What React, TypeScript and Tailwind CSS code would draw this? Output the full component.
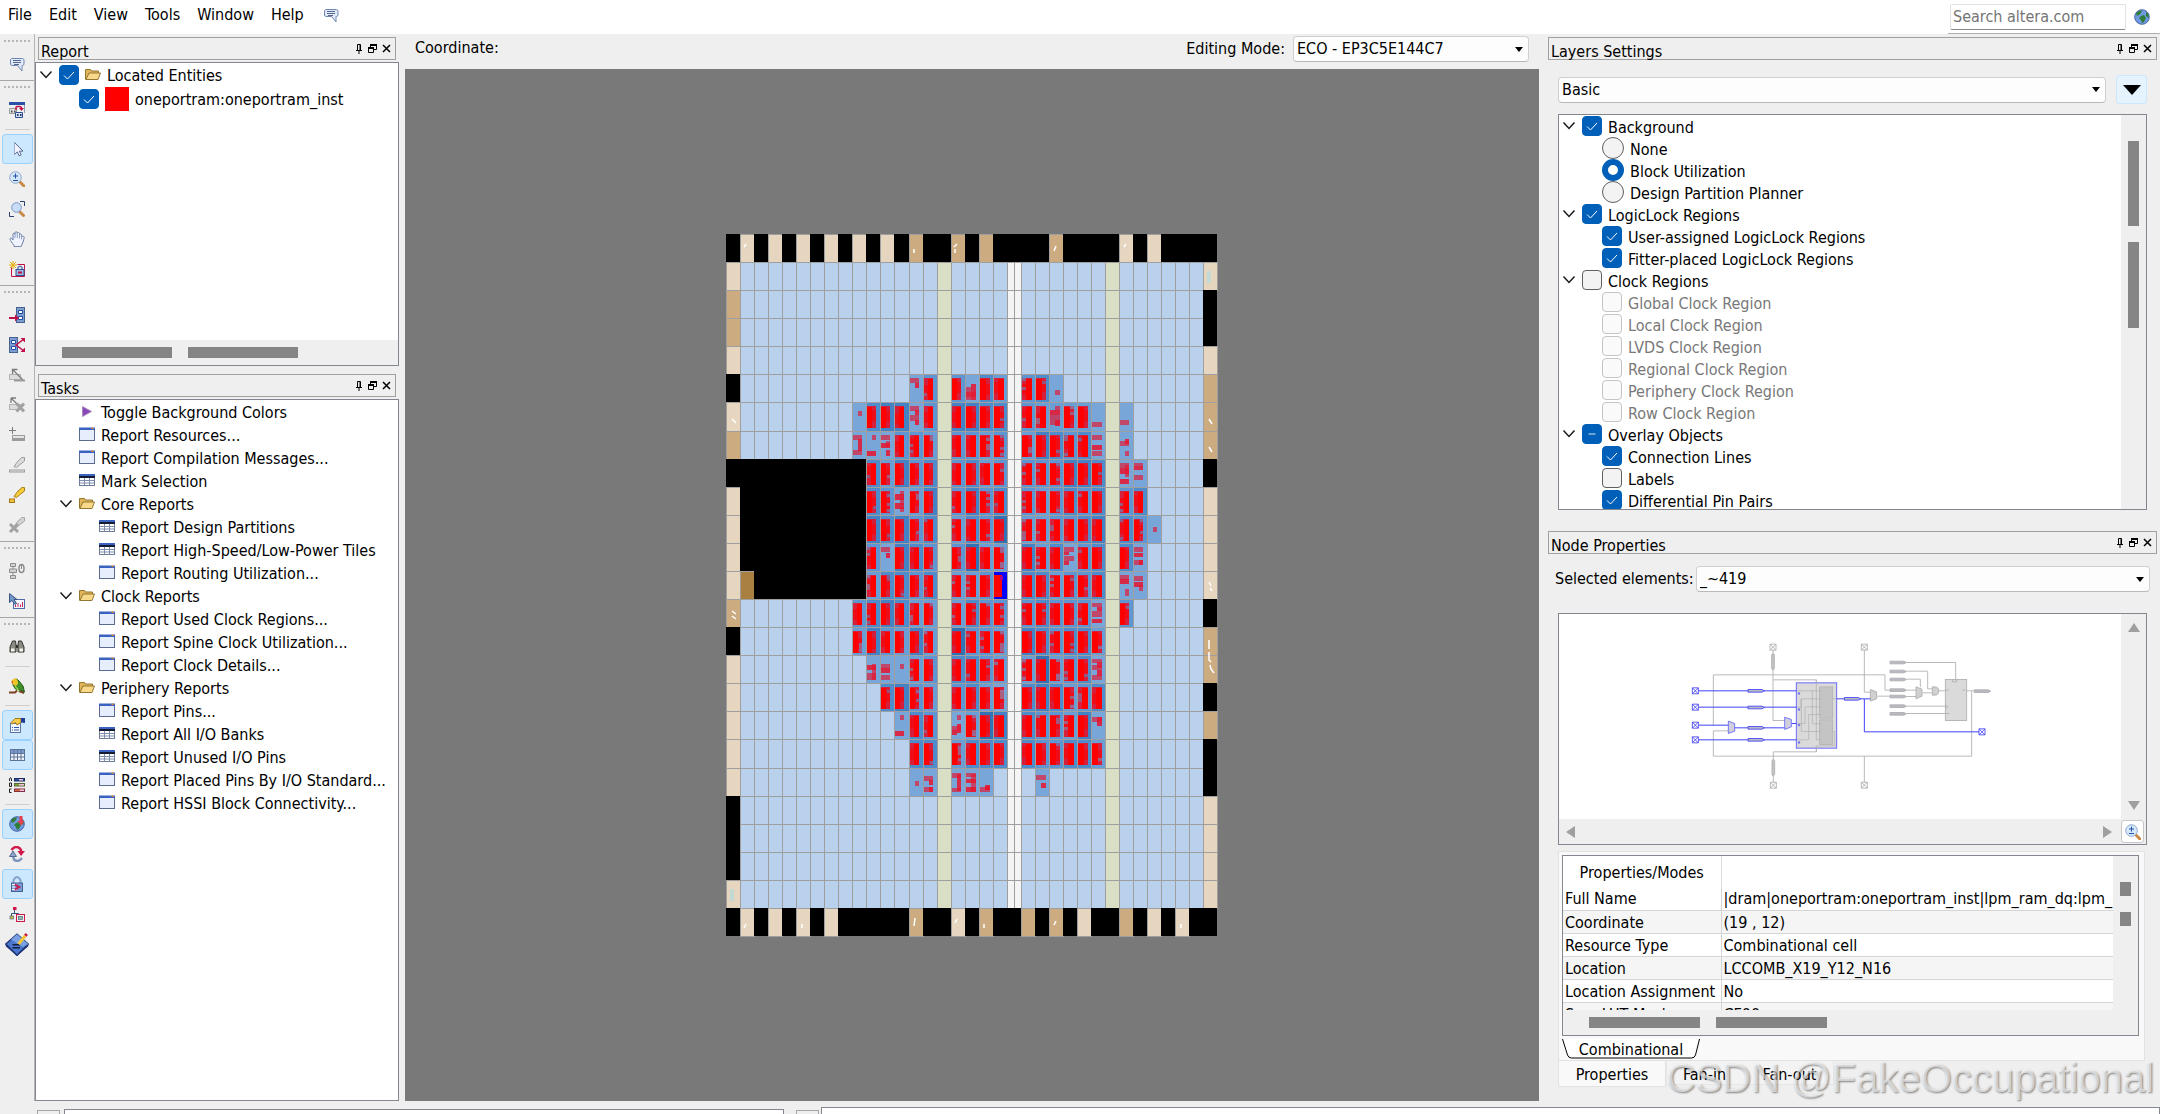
import { Fragment, type ReactNode } from "react";
import { clsx } from "clsx";

/* ------------------------------------------------------------------ */
/* Small glyphs                                                        */
/* ------------------------------------------------------------------ */

function Svg({ size = 16, className, children }: { size?: number; className?: string; children: ReactNode }) {
  return (
    <svg width={size} height={size} viewBox="0 0 16 16" className={clsx("shrink-0", className)} fill="none" aria-hidden>
      {children}
    </svg>
  );
}

const BubbleIcon = () => (
  <Svg>
    <path d="M2.5 2.5h11l1.500 1v5l-1.500 1h-.5v5.500l-4.500-5.500H3L1.500 8.500v-5z" fill="#dfe9fb" stroke="#7088ae" />
    <path d="M4 4.500h8M4 6.500h8M5 8.500h5" stroke="#33466b" strokeWidth=".8" />
  </Svg>
);

const WindowsIcon = () => (
  <Svg>
    <rect width="16" height="3" fill="#2a50a8" />
    <path d="M15.500 3v8" stroke="#8d9cb8" />
    <path d="M0.500 6.500h7v5h-7z" fill="#e4e4e4" stroke="#9a9a9a" />
    <path d="M2 9.500h1.500M5 9.500h1.500" stroke="#444" strokeWidth="2" />
    <path d="M7 8V5.500q0-1 1-1h2.500q2 0 2 2" stroke="#c0104a" strokeWidth="1.500" />
    <path d="M10 6h5l-2.500 3z" fill="#c0104a" />
    <path d="M6.500 10.500h7v5h-7z" fill="#d7e2f7" stroke="#2c4f8f" />
    <path d="M8 13h1.500M11 13h1.500" stroke="#22345a" strokeWidth="2" />
  </Svg>
);

const CursorIcon = () => (
  <Svg>
    <path d="M5.500 1.500v12l2.800-2.600 1.900 4 2-1-1.800-3.800h3.600z" fill="#f1f4ff" stroke="#5a6a90" />
    <path d="M5.500 1.500v12" stroke="#9db0d6" />
  </Svg>
);

const ZoomIcon = () => (
  <Svg>
    <path d="M11 11l4 4" stroke="#c98a45" strokeWidth="3" strokeLinecap="round" />
    <circle cx="6.500" cy="6.500" r="5.800" fill="#d5e8fb" stroke="#8fa9cf" />
    <path d="M6.500 2.500v5M4 5h5M4 9.500h5" stroke="#2450a5" />
  </Svg>
);

const ZoomFitIcon = () => (
  <Svg>
    <path d="M11 0.500h4.500V5M0.500 11v4.500H5" stroke="#2b4270" />
    <path d="M11 11l3.500 3.500" stroke="#c98a45" strokeWidth="3" strokeLinecap="round" />
    <circle cx="7.500" cy="6.500" r="4.800" fill="#c9def6" stroke="#7896c4" />
  </Svg>
);

const HandIcon = () => (
  <Svg>
    <path
      d="M5 14.500C3.500 12 1.500 10 0.800 7.800 1.500 6.500 3 7.300 4 9V3.200c0-1.400 1.800-1.400 2 0V1.800c.2-1.500 2-1.500 2.200 0v.600c.4-1.400 2.200-1.200 2.300.2v1.200c.5-1 2-.8 2.100.4v1.600c1-1 2.600-.6 2.600.6-.4 3.200-1.700 6-3.200 9.200H5z"
      fill="#eef3ff"
      stroke="#6c7fa8"
    />
    <path d="M6 3v4M8.300 2.500V7M10.500 3.500v4M12.600 5v3.500" stroke="#8fa0c4" />
  </Svg>
);

const NewRegionIcon = () => (
  <Svg>
    <path d="M2.500 6.500v9h13v-12h-7" stroke="#c0104a" />
    <path d="M4 0v8M0 4h8M1 1l6 6M7 1L1 7" stroke="#e9ab00" />
    <path d="M9 9V6.500q2-2.500 4 0V9" stroke="#5d7bb0" strokeWidth="1.500" />
    <rect x="7" y="8.500" width="8" height="6" fill="#9fb8e2" stroke="#33558f" />
    <path d="M9 11.500h4" stroke="#c0104a" strokeWidth="2" />
  </Svg>
);

const FanInIcon = () => (
  <Svg>
    <rect x="7.500" y="0.500" width="8" height="15" fill="#7d9dd2" stroke="#44628f" />
    <path d="M9.500 3.500h4v3h-4zM9.500 9.500h4v3h-4z" fill="#fff" stroke="#1f4ca0" />
    <path d="M0 11h7" stroke="#c0104a" strokeWidth="2" />
    <path d="M6 7.500l4 3.500-4 3.500z" fill="#c0104a" />
  </Svg>
);

const FanOutIcon = () => (
  <Svg>
    <rect x="0.500" y="0.500" width="8" height="15" fill="#7d9dd2" stroke="#44628f" />
    <path d="M2.500 3.500h4v3h-4zM2.500 9.500h4v3h-4z" fill="#fff" stroke="#1f4ca0" />
    <path d="M15 2L7 8l8 6" stroke="#c0104a" strokeWidth="1.500" />
    <path d="M11.500 1H16v4.500zM11.500 15H16v-4.500z" fill="#c0104a" />
  </Svg>
);

const GrayArrowIcon = ({ cross }: { cross?: boolean }) => (
  <Svg>
    <rect x="0.500" y="7.500" width="11" height="5" fill="#dcdcdc" stroke="#b3b3b3" />
    {cross ? (
      <>
        <path d="M2 1l7 7M2 1v5M2 1h5" stroke="#7d7d7d" strokeWidth="1.300" />
        <path d="M7.500 6.500l7.500 8M15 6.500l-7.500 8" stroke="#a2a2a2" strokeWidth="3" />
      </>
    ) : (
      <>
        <path d="M3 2l11 11M3.500 2v5M3.500 2.500h5" stroke="#7d7d7d" strokeWidth="1.300" />
        <path d="M5 13.500h11" stroke="#9b9b9b" strokeWidth="2" />
      </>
    )}
  </Svg>
);

const GrayPlusIcon = () => (
  <Svg>
    <path d="M3.500 0v7M0 3.500h7" stroke="#7c7c7c" />
    <rect x="3.500" y="8.500" width="12" height="5" fill="#e6e6e6" stroke="#9b9b9b" />
    <path d="M4 11h11v2.500H4z" fill="#9b9b9b" />
  </Svg>
);

const PenIcon = ({ body, edge, base }: { body: string; edge: string; base: "line" | "swatch" | "cross" }) => (
  <Svg>
    <path d="M5 9.500L9 4l4-3.500h2.500V4L10.500 8l-3 2.500z" fill={body} stroke={edge} />
    {base === "line" ? <rect x="0.500" y="13" width="15" height="2" fill="#e4e4e4" stroke={edge} /> : null}
    {base === "swatch" ? <rect x="0.500" y="12" width="5" height="3.500" fill="#f3c431" stroke="#a0761a" /> : null}
    {base === "cross" ? <path d="M1 7l8 8M9 7l-8 8" stroke="#a2a2a2" strokeWidth="3" /> : null}
  </Svg>
);

const ClockTreeIcon = () => (
  <Svg>
    <path d="M1.500 0.500h5v3h-5zM0.500 6h7v3.500h-7zM1.500 12.500h5v3h-5zM4 3.500V6M4 9.500v3" stroke="#8d8d8d" fill="#d2d2d2" />
    <ellipse cx="12.500" cy="5.500" rx="2.500" ry="4" stroke="#8a8a8a" strokeWidth="1.500" />
    <path d="M12.500 1v5" stroke="#8a8a8a" />
  </Svg>
);

const PickChartIcon = () => (
  <Svg>
    <rect x="4.500" y="6.500" width="11" height="9" fill="#f4f6fc" stroke="#4c6ca5" />
    <path d="M6.500 14v-2M9 14v-4M11.500 14v-2.500M13.500 14V9" stroke="#cc2a55" />
    <path d="M0.500 0.500v9l2.500-2 3 4 1.500-1-2.500-4H8z" fill="#7396c8" stroke="#39557f" />
  </Svg>
);

const BinocularsIcon = () => (
  <Svg>
    <path d="M1 13V8l2.500-6h3L7 6v7zM15 13V8l-2.500-6h-3L9 6v7z" fill="#8c8c84" stroke="#34342f" />
    <path d="M7 6h2v3H7z" fill="#34342f" />
    <path d="M2 9.500h3.500v3H2zM10.500 9.500H14v3h-3.500z" fill="#f4f4ee" />
  </Svg>
);

const ParrotIcon = () => (
  <Svg>
    <path d="M0 14.500h6l2-2M10 13l5 2" stroke="#7b4422" strokeWidth="2" />
    <path d="M4 3q3-4 6 0l4 5 1.500 6-4-2-5-1L4 7z" fill="#3f8f2c" stroke="#245a1a" />
    <path d="M2.500 2.500Q6-1 8.500 2L9 6 6.500 8 4 6.500z" fill="#f0c52a" />
    <path d="M2 4l2-1.500V6z" fill="#d96a1c" />
    <path d="M6 8l4 5" stroke="#8fcf45" strokeWidth="1.500" />
  </Svg>
);

const HandListIcon = () => (
  <Svg>
    <rect x="1.500" y="6.500" width="10" height="9" fill="#f4f7ff" stroke="#5a76a6" />
    <path d="M3 10.500h1M5 10.500h5M3 13h1M5 13h5" stroke="#2c58b0" />
    <path d="M2 5.500l4-4H12v4L8 8 6.500 5.500 3 7z" fill="#f5cb4c" stroke="#a8791d" />
    <path d="M12 1h4v5l-4-.5z" fill="#1c3f99" />
  </Svg>
);

const GridIcon = () => (
  <Svg>
    <rect x="1.500" y="2.500" width="14" height="11" fill="#eef3fb" stroke="#5c7396" />
    <path d="M2 3h13v3H2z" fill="#7a9ad0" />
    <path d="M1.500 6.500h14M1.500 10h14M5 2.500v11M8.500 2.500v11M12 2.500v11" stroke="#5c7396" />
  </Svg>
);

const LegendIcon = () => (
  <Svg>
    <path d="M0.500 4V2l1-1.500L2.500 2v2M0.500 6h2v3.500h-2zM2.500 12h-2v3.500h2" stroke="#222" />
    <rect x="5.500" y="1.500" width="10" height="2.500" fill="#2b52a8" stroke="#1b2f5c" />
    <rect x="5.500" y="6.500" width="10" height="2.500" fill="#86a832" stroke="#55633d" />
    <rect x="5.500" y="12" width="10" height="2.500" fill="#e06a2a" stroke="#7a2f4a" />
    <path d="M10 2.700h4M10 7.700h5M11 13.200h4" stroke="#f2c1dd" strokeWidth="1.500" />
  </Svg>
);

const GlobeIcon = ({ arrow }: { arrow?: boolean }) => (
  <Svg>
    <circle cx="8" cy="8" r="7.300" fill="#6f9ae0" stroke="#4a68a8" />
    <path d="M2 4q3-3 6-2.500L7 4 5 6 3 7zM7 7l3-1 2 3-2 4-2 1-1-3-2-2z" fill="#2f7d38" />
    <path d="M12 3l2.500 2.500V9L12 7z" fill="#2f7d38" />
    {arrow ? <path d="M10.500 0h3v5h2L12 9.500 8.500 5h2z" fill="#e8404e" /> : null}
  </Svg>
);

const SwapIcon = () => (
  <Svg>
    <path d="M2.500 4Q6-1 11 2.500l1.500 2.500" stroke="#d3164a" strokeWidth="2.500" />
    <path d="M8.500 5H16l-4 5z" fill="#d3164a" />
    <path d="M13 12q-4 5-8 1.500L4 10" stroke="#7e97bd" strokeWidth="2.500" />
    <path d="M0.500 10.500L4 5l3.500 5.500z" fill="#8fa8cc" stroke="#516a92" />
  </Svg>
);

const LockIcon = () => (
  <Svg>
    <path d="M4.500 7V4q3.500-6 7 0v3" stroke="#86a3cf" strokeWidth="2" />
    <rect x="2.500" y="7" width="11" height="8.500" fill="#7d9bd0" stroke="#46639a" />
    <path d="M3 8.500h5M3 11h3M3 13.500h5" stroke="#fff" />
    <path d="M6 8.500l4 2.500-4 2.500" stroke="#c9134a" strokeWidth="2" />
  </Svg>
);

const HierarchyIcon = () => (
  <Svg>
    <path d="M5.500 4v3.500M2.500 10V7.500h7V9" stroke="#39537e" />
    <rect x="4" y="1" width="3.500" height="3" fill="#d3164a" />
    <rect x="1" y="10" width="3.500" height="3" fill="#c8c23a" stroke="#39537e" strokeWidth=".6" />
    <rect x="7.500" y="8.500" width="8" height="7" stroke="#d3164a" />
    <rect x="9.500" y="10.500" width="4" height="3" fill="#8fc4a4" stroke="#39537e" strokeWidth=".6" />
  </Svg>
);

const ChipEditIcon = () => (
  <Svg size={24}>
    <path d="M8 1.500l7.500 6.500L8 15.500.5 8z" fill="#4a77cc" stroke="#243a78" />
    <path d="M0.500 8L8 15.500 15.500 8v1.500L8 16 .5 9.500z" fill="#1b2f78" />
    <path d="M8 1.500L15.500 8 12 10 4 5z" fill="#7aa0e4" />
    <path d="M5 8.500h5M5 10.500h5" stroke="#14213f" />
    <path d="M9 8l4.500-5.500" stroke="#f2c531" strokeWidth="2" />
    <path d="M13.500 2.500l1-1.200" stroke="#c9134a" strokeWidth="2" />
  </Svg>
);

const FolderIcon = () => (
  <Svg>
    <path d="M0.500 12.500v-10h5l1 1.500h7v3" fill="#e2b55a" stroke="#94772f" />
    <path d="M1 12.500l3-6.500h11.500l-2.500 6.500z" fill="#f8d98c" stroke="#94772f" />
  </Svg>
);

const ReportIcon = () => (
  <Svg>
    <rect x="0.500" y="1.500" width="15" height="12" fill="#e6edfc" stroke="#5a6a90" />
    <path d="M0 0.500h16V3H0z" fill="#3a62c0" />
    <path d="M12.500 0.500h2V2h-2z" fill="#f08a24" />
  </Svg>
);

const TableIcon = () => (
  <Svg>
    <rect x="0.500" y="1.500" width="15" height="11" fill="#fff" stroke="#6d7d9b" />
    <path d="M0 1h16v2H0z" fill="#3a62c0" />
    <path d="M0 3h16v2H0z" fill="#141b33" />
    <path d="M1 7.500h14M1 10h14M5.500 5v7.500M10.500 5v7.500" stroke="#7d8dab" />
  </Svg>
);

const PlayIcon = () => (
  <Svg>
    <path d="M3.500 2.500l9 5-9 5z" fill="#8748b5" stroke="#a98ac0" />
  </Svg>
);

const Chevron = () => (
  <svg width="14" height="14" viewBox="0 0 14 14" className="shrink-0" fill="none" aria-hidden>
    <path d="M1.500 3.500L7 9.500l5.500-6" stroke="#1a1a1a" strokeWidth="1.500" />
  </svg>
);

/* ------------------------------------------------------------------ */
/* Form controls                                                       */
/* ------------------------------------------------------------------ */

interface CheckProps {
  id: string;
  checked?: boolean;
  disabled?: boolean;
  partial?: boolean;
}

function Check({ id, checked, disabled, partial }: CheckProps) {
  return (
    <span className="grid size-5 shrink-0">
      <input
        id={id}
        type="checkbox"
        defaultChecked={checked}
        disabled={disabled}
        className="peer size-5 appearance-none rounded-[4px] border border-[#5f5f5f] bg-[#f3f3f3] [grid-area:1/1] checked:border-[#005fb8] checked:bg-[#005fb8] disabled:border-[#c4c4c4] disabled:bg-[#fafafa]"
      />
      <svg viewBox="0 0 20 20" className="pointer-events-none hidden size-5 [grid-area:1/1] peer-checked:block" fill="none" aria-hidden>
        {partial ? <path d="M6.500 10h7" stroke="#8fb8de" strokeWidth="1.500" /> : <path d="M5 10.500l3.500 3.500L15 7" stroke="#fff" />}
      </svg>
    </span>
  );
}

function Radio({ id, checked }: { id: string; checked?: boolean }) {
  return (
    <input
      id={id}
      type="radio"
      name="background"
      defaultChecked={checked}
      className="size-[22px] shrink-0 appearance-none rounded-full border border-[#5f5f5f] bg-[#f3f3f3] checked:border-[6px] checked:border-[#005fb8] checked:bg-white"
    />
  );
}

interface ComboProps {
  id: string;
  label?: string;
  value: string;
  className?: string;
}

function Combo({ id, label, value, className }: ComboProps) {
  return (
    <div className={clsx("grid items-center", className)}>
      <select
        id={id}
        aria-label={label}
        className="h-[26px] w-full appearance-none rounded-[4px] border border-[#d0d0d0] border-b-[#b9b9b9] bg-[#fdfdfd] pl-[3px] leading-6 [grid-area:1/1]"
      >
        <option>{value}</option>
      </select>
      <svg width="8" height="5" viewBox="0 0 8 5" className="pointer-events-none mr-1.5 justify-self-end [grid-area:1/1]" aria-hidden>
        <path d="M0 0h8L4 5z" fill="#000" />
      </svg>
    </div>
  );
}

function DockTitle({ title, className }: { title: string; className?: string }) {
  return (
    <div className={clsx("flex h-[23px] shrink-0 justify-between border border-[#a0a0a0] pl-0.5", className)}>
      <h2 className="pt-1.5 leading-4">{title}</h2>
      <div className="flex items-center gap-[5px] self-center pr-1">
        <button type="button" aria-label={`Pin ${title}`}>
          <svg width="8" height="10" viewBox="0 0 8 10" fill="none" className="block" aria-hidden>
            <path d="M2.500 6V.5h3V6M1 6.500h6M4 6.500V10" stroke="#000" />
            <path d="M5 1v5" stroke="#000" />
          </svg>
        </button>
        <button type="button" aria-label={`Float ${title}`}>
          <svg width="9" height="9" viewBox="0 0 9 9" fill="none" className="block" aria-hidden>
            <path d="M2.500 3.500V1h6v4.500H6M.5 4h5v4.500h-5z" stroke="#000" />
            <path d="M2 1h7M0 4h6" stroke="#000" strokeWidth="2" />
          </svg>
        </button>
        <button type="button" aria-label={`Close ${title}`}>
          <svg width="9" height="9" viewBox="0 0 9 9" fill="none" className="block" aria-hidden>
            <path d="M1 1l7 7M8 1L1 8" stroke="#000" strokeWidth="1.500" />
          </svg>
        </button>
      </div>
    </div>
  );
}

/* ------------------------------------------------------------------ */
/* Menu bar and tool bar                                               */
/* ------------------------------------------------------------------ */

const MENUS = ["File", "Edit", "View", "Tools", "Window", "Help"];

function MenuBar() {
  return (
    <header className="flex h-[34px] shrink-0 justify-between bg-white">
      <nav className="flex items-center gap-[17px] pb-1 pl-2">
        {MENUS.map((menu) => (
          <button key={menu} type="button">
            {menu}
          </button>
        ))}
        <button type="button" aria-label="Feedback" className="ml-0.5">
          <BubbleIcon />
        </button>
      </nav>
      <div className="flex items-center gap-2 border-b border-[#b0b0b0] pr-2.5 pl-0.5">
        <input
          type="text"
          aria-label="Search altera.com"
          placeholder="Search altera.com"
          className="h-[26px] w-[176px] rounded-[2px] border border-[#e2e2e2] border-b-[#868686] bg-white px-0.5 placeholder:text-[#757575]"
        />
        <button type="button" aria-label="Go to web site">
          <GlobeIcon />
        </button>
      </div>
    </header>
  );
}

interface Tool {
  label: string;
  icon: ReactNode;
  active?: boolean;
}

// Tools per bar; the inner arrays are split by a thin separator.
const TOOLBARS: Tool[][][] = [
  [[{ label: "Send feedback", icon: <BubbleIcon /> }]],
  [
    [{ label: "Detach window", icon: <WindowsIcon /> }],
    [
      { label: "Selection tool", icon: <CursorIcon />, active: true },
      { label: "Zoom tool", icon: <ZoomIcon /> },
      { label: "Fit in window", icon: <ZoomFitIcon /> },
      { label: "Hand tool", icon: <HandIcon /> },
      { label: "Create LogicLock region", icon: <NewRegionIcon /> },
    ],
  ],
  [
    [
      { label: "Generate fan-in", icon: <FanInIcon /> },
      { label: "Generate fan-out", icon: <FanOutIcon /> },
      { label: "Immediate connections", icon: <GrayArrowIcon /> },
      { label: "Clear connections", icon: <GrayArrowIcon cross /> },
      { label: "Add node", icon: <GrayPlusIcon /> },
      { label: "Highlight routing", icon: <PenIcon body="#dcdcdc" edge="#9b9b9b" base="line" /> },
      { label: "Highlight", icon: <PenIcon body="#f6cd38" edge="#a87f1d" base="swatch" /> },
      { label: "Clear highlight", icon: <PenIcon body="#d2d2d2" edge="#a6a6a6" base="cross" /> },
    ],
  ],
  [
    [
      { label: "Show delays", icon: <ClockTreeIcon /> },
      { label: "Critical paths", icon: <PickChartIcon /> },
    ],
  ],
  [
    [{ label: "Find", icon: <BinocularsIcon /> }],
    [{ label: "Bird's eye view", icon: <ParrotIcon /> }],
    [
      { label: "Properties", icon: <HandListIcon />, active: true },
      { label: "Report window", icon: <GridIcon />, active: true },
      { label: "Color legend", icon: <LegendIcon /> },
    ],
    [
      { label: "Layers", icon: <GlobeIcon arrow />, active: true },
      { label: "Refresh", icon: <SwapIcon /> },
      { label: "LogicLock regions", icon: <LockIcon />, active: true },
      { label: "Hierarchy", icon: <HierarchyIcon /> },
      { label: "Check and save changes", icon: <ChipEditIcon /> },
    ],
  ],
];

function ToolBar() {
  return (
    <aside className="flex w-[35px] shrink-0 flex-col border-r border-[#b4b4b4]">
      {TOOLBARS.map((groups, i) => (
        <div key={i} className={clsx("flex flex-col items-center border-t pb-px", i === 0 ? "border-transparent" : "border-[#a6a6a6]")}>
          <div className="mb-[3px] flex h-[11px] items-center gap-0.5">
            {[0, 1, 2, 3, 4, 5, 6].map((dot) => (
              <span key={dot} className="size-0.5 bg-[#b5b5b5]" />
            ))}
          </div>
          {groups.map((tools, g) => (
            <Fragment key={g}>
              {g > 0 ? <hr className="my-1 w-[25px] border-[#cfcfcf]" /> : null}
              {tools.map((tool) => (
                <button
                  key={tool.label}
                  type="button"
                  aria-label={tool.label}
                  aria-pressed={tool.active}
                  className={clsx(
                    "flex h-[30px] w-[31px] items-center justify-center rounded-[3px] border",
                    tool.active ? "border-[#99d1ff] bg-[#cce8ff]" : "border-transparent",
                  )}
                >
                  {tool.icon}
                </button>
              ))}
            </Fragment>
          ))}
        </div>
      ))}
    </aside>
  );
}

/* ------------------------------------------------------------------ */
/* Left docks                                                          */
/* ------------------------------------------------------------------ */

type TaskIcon = "play" | "report" | "table";

interface Task {
  label: string;
  icon: TaskIcon;
}

const TASK_ICON: Record<TaskIcon, ReactNode> = {
  play: <PlayIcon />,
  report: <ReportIcon />,
  table: <TableIcon />,
};

const TOP_TASKS: Task[] = [
  { label: "Toggle Background Colors", icon: "play" },
  { label: "Report Resources...", icon: "report" },
  { label: "Report Compilation Messages...", icon: "report" },
  { label: "Mark Selection", icon: "table" },
];

const TASK_GROUPS: { label: string; tasks: Task[] }[] = [
  {
    label: "Core Reports",
    tasks: [
      { label: "Report Design Partitions", icon: "table" },
      { label: "Report High-Speed/Low-Power Tiles", icon: "table" },
      { label: "Report Routing Utilization...", icon: "report" },
    ],
  },
  {
    label: "Clock Reports",
    tasks: [
      { label: "Report Used Clock Regions...", icon: "report" },
      { label: "Report Spine Clock Utilization...", icon: "report" },
      { label: "Report Clock Details...", icon: "report" },
    ],
  },
  {
    label: "Periphery Reports",
    tasks: [
      { label: "Report Pins...", icon: "report" },
      { label: "Report All I/O Banks", icon: "table" },
      { label: "Report Unused I/O Pins", icon: "table" },
      { label: "Report Placed Pins By I/O Standard...", icon: "report" },
      { label: "Report HSSI Block Connectivity...", icon: "report" },
    ],
  },
];

function TaskRow({ task, nested }: { task: Task; nested?: boolean }) {
  return (
    <li className={clsx("flex h-[23px] items-center gap-1.5", nested ? "pl-[63px]" : "pl-[43px]")}>
      {TASK_ICON[task.icon]}
      <span className="pt-0.5 whitespace-nowrap">{task.label}</span>
    </li>
  );
}

function ReportDock() {
  return (
    <section>
      <DockTitle title="Report" className="mx-[3px]" />
      <div className="mt-0.5 flex h-[304px] flex-col border border-[#828790] bg-white">
        <ul className="flex-1">
          <li className="flex h-6 items-center pl-[3px]">
            <Chevron />
            <span className="ml-1.5">
              <Check id="located" checked />
            </span>
            <label htmlFor="located" className="ml-1.5 flex items-center gap-1.5">
              <FolderIcon />
              <span className="pt-0.5">Located Entities</span>
            </label>
          </li>
          <li className="flex h-6 items-center pl-[43px]">
            <Check id="inst" checked />
            <label htmlFor="inst" className="ml-1.5 flex items-center gap-1.5">
              <span className="size-6 bg-[#ff0000]" />
              <span className="pt-0.5">oneportram:oneportram_inst</span>
            </label>
          </li>
        </ul>
        <div className="flex h-[25px] items-center gap-4 bg-[#efefef] pl-[26px]">
          <span className="h-[11px] w-[110px] bg-[#858585]" />
          <span className="h-[11px] w-[110px] bg-[#858585]" />
        </div>
      </div>
    </section>
  );
}

function TasksDock() {
  return (
    <section className="mt-2 flex min-h-0 flex-1 flex-col">
      <DockTitle title="Tasks" className="mx-[3px]" />
      <ul className="mt-0.5 flex-1 overflow-hidden border border-[#828790] bg-white">
        {TOP_TASKS.map((task) => (
          <TaskRow key={task.label} task={task} />
        ))}
        {TASK_GROUPS.map((group) => (
          <li key={group.label}>
            <div className="flex h-[23px] items-center pl-[23px]">
              <Chevron />
              <span className="mx-1.5">
                <FolderIcon />
              </span>
              <span className="pt-0.5">{group.label}</span>
            </div>
            <ul>
              {group.tasks.map((task) => (
                <TaskRow key={task.label} task={task} nested />
              ))}
            </ul>
          </li>
        ))}
      </ul>
    </section>
  );
}

/* ------------------------------------------------------------------ */
/* Floorplan                                                           */
/* ------------------------------------------------------------------ */

// K black, B pad, T used pad, A pad with a PLL, W brown, . free LAB,
// G memory column, C clock spine, 1-6 LAB utilization, S selected LAB
const FLOORPLAN = [
  "KBKBKBKBKBKBKTKKTKTKKKKTKKKKBKBKKKK",
  "B..............G....C......G......A",
  "T..............G....C......G......K",
  "T..............G....C......G......K",
  "B..............G....C......G......B",
  "K............13G3142C341...G......T",
  "B........145513G5544C322221G1.....T",
  "T........111332G3323C254341G1.....T",
  "KKKKKKKKKK42534G3423C333554G11....K",
  "BKKKKKKKKK43125G3534C323434G34....B",
  "BKKKKKKKKK54534G2436C223345G431...B",
  "BKKKKKKKKK31543G3622C524134G41....B",
  "BWKKKKKKKK24434G223SC442334G11....B",
  "T........345422G2433C343331G3.....K",
  "K........253252G6332C543442G......T",
  "B.........11123G4432C262341G......T",
  "B..........4532G3421C454234G......K",
  "B...........143G1265C433251G......T",
  "B............44G2444C433442G......K",
  "B............11G111.C.1....G......K",
  "K..............G....C......G......B",
  "K..............G....C......G......B",
  "K..............G....C......G......B",
  "A..............G....C......G......B",
  "KBKBKBKBKKKKKTKKBKTKKTKTKBKKTKBKBKK",
];

const CELL_FILL: Record<string, string> = {
  K: "#000000",
  B: "#e6d5bf",
  A: "#e6d5bf",
  T: "#ccab80",
  W: "#a97f42",
  ".": "#b9d1ec",
  G: "#d9dfc5",
  C: "#f4f4f4",
  S: "#0000ff",
  "1": "#79a6d9",
  "2": "#6a9fd6",
  "3": "#5d96d2",
  "4": "#4f8ccb",
  "5": "#4282c5",
  "6": "#3273b6",
};

const colX = (c: number) => c * 14 + (c >= 13 ? 1 : 0);
const rowY = (r: number) => r * 28 + (r >= 7 ? 1 : 0) + (r >= 19 ? 1 : 0);

// Sparse LABs: [side, y, height]; side 0 left half, 1 right half, 2 both.
const SPARSE: Record<string, [number, number, number][]> = {
  "5-13": [[2, 4, 5], [1, 9, 5]],
  "5-17": [[0, 13, 13], [1, 10, 16], [2, 18, 5]],
  "5-23": [[1, 16, 5]],
  "6-9": [[1, 9, 5]],
  "6-13": [[2, 4, 5], [1, 8, 5], [2, 13, 6], [1, 18, 5]],
  "6-23": [[1, 4, 5], [2, 8, 5], [2, 13, 10], [1, 18, 6]],
  "6-26": [[2, 20, 5]],
  "6-28": [[2, 18, 5]],
  "7-9": [[2, 4, 5], [1, 8, 12], [2, 19, 5]],
  "7-10": [[1, 4, 5], [2, 20, 5]],
  "7-11": [[2, 4, 5], [2, 12, 5], [1, 10, 6], [1, 19, 6]],
  "7-26": [[2, 4, 5], [2, 14, 5], [2, 20, 5]],
  "7-28": [[2, 10, 5], [1, 8, 5], [1, 20, 5]],
  "8-28": [[2, 4, 5], [2, 9, 6], [1, 6, 12], [2, 20, 5]],
  "8-29": [[2, 4, 3], [2, 7, 4], [2, 16, 5]],
  "9-12": [[1, 4, 5], [2, 7, 6], [1, 10, 8], [2, 16, 6], [1, 20, 5]],
  "10-30": [[1, 12, 5]],
  "11-11": [[2, 4, 5], [1, 10, 5]],
  "11-24": [[2, 4, 5], [0, 9, 3], [2, 13, 5], [0, 18, 4]],
  "11-29": [[2, 4, 5], [2, 10, 4], [2, 17, 5], [1, 17, 5]],
  "12-28": [[2, 4, 5], [2, 8, 5], [1, 18, 7]],
  "12-29": [[2, 5, 5], [2, 11, 5], [1, 14, 6]],
  "13-26": [[2, 4, 4], [1, 8, 4], [2, 12, 6], [2, 20, 4]],
  "15-10": [[1, 9, 16], [2, 10, 5], [2, 18, 7]],
  "15-11": [[2, 9, 5], [2, 13, 5], [2, 20, 5]],
  "15-12": [[1, 9, 5]],
  "15-26": [[2, 4, 4], [1, 7, 6], [2, 10, 5], [1, 15, 6], [2, 20, 5]],
  "17-12": [[1, 4, 5], [2, 20, 5]],
  "17-16": [[1, 4, 5], [1, 13, 9], [2, 15, 5], [0, 19, 5]],
  "17-26": [[2, 6, 5], [1, 6, 9]],
  "19-13": [[1, 13, 5]],
  "19-14": [[2, 8, 5], [1, 12, 5], [2, 19, 5], [1, 19, 5]],
  "19-16": [[2, 5, 5], [1, 6, 17], [2, 20, 4]],
  "19-17": [[2, 5, 4], [2, 11, 4], [1, 6, 18], [2, 19, 5]],
  "19-18": [[2, 19, 5], [1, 17, 5], [1, 18, 4]],
  "19-22": [[2, 7, 5], [1, 15, 5]],
};

// Small deterministic hash, gives the texture of the filled LABs.
function noise(a: number, b: number, c: number) {
  const v = Math.sin(a * 127.1 + b * 311.7 + c * 74.7) * 43758.5453;
  return v - Math.floor(v);
}

function LabFill({ row, col, level }: { row: number; col: number; level: number }) {
  const x = colX(col) + 1;
  const y = rowY(row);
  const wide = col > 16 && col < 28 ? 1 : 0;
  const sparse = SPARSE[`${row}-${col}`];
  if (sparse) {
    return (
      <>
        {sparse.map(([side, dy, h], i) => (
          <rect key={i} x={x + (side === 1 ? 5 : 0)} y={y + dy} width={side === 2 ? 9 + wide : side === 1 ? 4 + wide : 5} height={h} fill="#e8142e" opacity={i % 2 ? 0.85 : 0.65} />
        ))}
      </>
    );
  }
  const strongRight = noise(row, col, 1) > 0.5;
  const gaps = [0, 1, 2, 3, 4, 5, 6].filter((i) => noise(row, col, i + 10) > 0.65 + level * 0.07);
  return (
    <>
      <rect x={x} y={y + 4} width={9 + wide} height="22" fill="#e3132b" opacity="0.9" />
      <rect x={strongRight ? x + 4 : x} y={y + 5} width={5 + wide} height="21" fill="#ff0000" />
      <rect x={x} y={y + 7 + Math.floor(noise(row, col, 5) * 5)} width={9 + wide} height="11" fill="#ff0000" opacity="0.6" />
      {gaps.map((i) => (
        <rect key={i} x={strongRight ? x : x + 6} y={y + 4 + i * 3} width={3 + wide} height="3" fill={CELL_FILL[level]} opacity="0.55" />
      ))}
    </>
  );
}

const ROUTES =
  "M20 10l-2 3M188 15v4M231 10l-3 3M229 15v4M330 12l-2 5M400 10l-2 3M6 185l4 4M6 377l4 3M6 382l4 3M20 690l-2 4M76 690v4M189 684l-1 8M231 685l-2 4M258 690v4M330 687l-2 4M455 690v4M483 185l3 5M483 213l3 5M483 348l2 4M484 354l2 3M483 406v9M483 418v8l2 2M484 431l1 4M485 435l3 4";

function Floorplan() {
  return (
    <svg width="492" height="703" viewBox="0 0 492 703" className="shrink-0" role="img" aria-label="Device floorplan">
      {FLOORPLAN.map((cells, row) =>
        cells.split("").map((cell, col) => {
          const x = colX(col);
          const y = rowY(row);
          const w = colX(col + 1) - x;
          const h = rowY(row + 1) - y;
          const level = Number(cell);
          return (
            <g key={`${row}-${col}`}>
              <rect x={x} y={y} width={w} height={h} fill={CELL_FILL[cell]} />
              {level > 0 ? <LabFill row={row} col={col} level={level} /> : null}
              {cell === "S" ? (
                <>
                  <rect x={x + 1} y={y + 4} width="8" height="22" fill="#f00" />
                  <rect x={x + 7} y={y + 5} width="3" height="4" fill="#a0008c" />
                </>
              ) : null}
              {cell === "A" ? <rect x={x + 4} y={y + 9} width="4" height="12" fill="#c3d9d3" /> : null}
              {cell === "C" ? <path d={`M${x + 7.5} ${y}v${h}`} stroke="#9f9f9f" /> : null}
              {cell !== "K" ? <rect x={x + 0.5} y={y + 0.5} width={w} height={h} fill="none" stroke="#9f9f9f" /> : null}
            </g>
          );
        }),
      )}
      <path d={ROUTES} fill="none" stroke="#ffffff" strokeWidth="1.500" />
    </svg>
  );
}

function ChipView() {
  return (
    <main className="flex min-w-0 flex-1 flex-col">
      <div className="flex h-[35px] shrink-0 items-start justify-between px-2.5 pt-0.5">
        <span>Coordinate:</span>
        <div className="flex items-center gap-2">
          <label htmlFor="editing-mode">Editing Mode:</label>
          <Combo id="editing-mode" value="ECO - EP3C5E144C7" className="w-[236px]" />
        </div>
      </div>
      <div className="flex min-h-0 flex-1 items-center justify-center overflow-hidden bg-[#797979]">
        <Floorplan />
      </div>
    </main>
  );
}

/* ------------------------------------------------------------------ */
/* Layers settings                                                     */
/* ------------------------------------------------------------------ */

interface Layer {
  label: string;
  checked?: boolean;
  disabled?: boolean;
}

interface LayerGroup extends Layer {
  partial?: boolean;
  radio?: boolean;
  children: Layer[];
}

const LAYERS: LayerGroup[] = [
  {
    label: "Background",
    checked: true,
    radio: true,
    children: [{ label: "None" }, { label: "Block Utilization", checked: true }, { label: "Design Partition Planner" }],
  },
  {
    label: "LogicLock Regions",
    checked: true,
    children: [
      { label: "User-assigned LogicLock Regions", checked: true },
      { label: "Fitter-placed LogicLock Regions", checked: true },
    ],
  },
  {
    label: "Clock Regions",
    children: [
      { label: "Global Clock Region", disabled: true },
      { label: "Local Clock Region", disabled: true },
      { label: "LVDS Clock Region", disabled: true },
      { label: "Regional Clock Region", disabled: true },
      { label: "Periphery Clock Region", disabled: true },
      { label: "Row Clock Region", disabled: true },
    ],
  },
  {
    label: "Overlay Objects",
    checked: true,
    partial: true,
    children: [{ label: "Connection Lines", checked: true }, { label: "Labels" }, { label: "Differential Pin Pairs", checked: true }],
  },
];

function LayerTree() {
  return (
    <div className="mt-2.5 mr-[13px] ml-[19px] flex h-[396px] shrink-0 overflow-hidden border border-[#828790] bg-white">
      <ul className="flex-1">
        {LAYERS.map((group) => (
          <li key={group.label}>
            <div className="flex h-[22px] items-center pl-[3px]">
              <Chevron />
              <span className="mx-1.5">
                <Check id={group.label} checked={group.checked} partial={group.partial} />
              </span>
              <label htmlFor={group.label} className="pt-1">
                {group.label}
              </label>
            </div>
            <ul>
              {group.children.map((layer) => (
                <li key={layer.label} className="flex h-[22px] items-center gap-1.5 pl-[43px]">
                  {group.radio ? <Radio id={layer.label} checked={layer.checked} /> : <Check id={layer.label} checked={layer.checked} disabled={layer.disabled} />}
                  <label htmlFor={layer.label} className={clsx("pt-1", layer.disabled && "text-[#787878]")}>
                    {layer.label}
                  </label>
                </li>
              ))}
            </ul>
          </li>
        ))}
      </ul>
      <div className="flex w-[25px] flex-col items-center gap-4 bg-[#efefef] pt-[26px]">
        <span className="h-[85px] w-[11px] bg-[#858585]" />
        <span className="h-[86px] w-[11px] bg-[#858585]" />
      </div>
    </div>
  );
}

function LayersDock() {
  return (
    <section className="shrink-0">
      <DockTitle title="Layers Settings" className="mr-[3px] ml-[9px]" />
      <div className="mt-[15px] mr-[13px] ml-[19px] flex items-center gap-2.5">
        <Combo id="layer-preset" label="Layer preset" value="Basic" className="flex-1" />
        <button type="button" aria-label="More presets" className="flex h-[29px] w-[31px] items-center justify-center rounded-[3px] border border-[#cce8ff] bg-[#e5f3ff]">
          <svg width="18" height="10" viewBox="0 0 18 10" aria-hidden>
            <path d="M0 0h18L9 10z" fill="#000" />
          </svg>
        </button>
      </div>
      <LayerTree />
    </section>
  );
}

/* ------------------------------------------------------------------ */
/* Node properties                                                     */
/* ------------------------------------------------------------------ */

function Port({ x, y }: { x: number; y: number }) {
  return <path d={`M${x - 9} ${y - 9}h18v18h-18zl18 18m0-18l-18 18`} strokeWidth="2.500" />;
}

function Buffer({ x, y, vertical }: { x: number; y: number; vertical?: boolean }) {
  return vertical ? (
    <path d={`M${x - 4} ${y}l4-3 4 3v42l-4 5-4-5z`} fill="#c4c4c4" strokeWidth="2.500" />
  ) : (
    <path d={`M${x} ${y - 4}h42l7 4-7 4h-42z`} fill="#b9b9c4" strokeWidth="2.500" />
  );
}

function CellSchematic() {
  return (
    <svg viewBox="-303 12 1686 612" className="h-full w-full" fill="none" role="img" aria-label="Combinational cell schematic">
      <g stroke="#acacac" strokeWidth="2.500">
        <path d="M339 118v212h35M339 208h130v216H340v92M160 345V193h515v46h16M205 361h-45v76h775V242M613 118v127h20M613 437v80" />
        <path d="M652 257h38M739 239h30M739 258h30M739 206h42v24M739 182h64v53h14M739 156h148v52M788 247h28M836 241h20M739 287h117M739 309h117M919 241h25" />
        <Port x={339} y={110} />
        <Port x={613} y={110} />
        <Port x={340} y={524} />
        <Port x={613} y={524} />
        <Buffer x={339} y={132} vertical />
        <Buffer x={340} y={450} vertical />
        {[156, 183, 207, 239, 258, 287, 310].map((y) => (
          <Buffer key={y} x={690} y={y} />
        ))}
        <Buffer x={943} y={242} />
        <path d="M631 237l19 7v21l-19 7zM768 229l18 7v21l-18 8z" fill="#d0d0d0" />
        <path d="M817 229h7q12 0 12 12.500T824 254h-7z" fill="#d0d0d0" />
        <rect x="856" y="207" width="64" height="123" fill="#dadada" />
        <path d="M856 283l8 6-8 6M878 207v7h12v-7M908 239h8M858 239h7M858 309h10" />
      </g>
      <rect x="409" y="217" width="121" height="196" fill="#dadada" stroke="#6a6af5" strokeWidth="3" />
      <g stroke="#adadad" strokeWidth="2">
        <rect x="479" y="229" width="39" height="94" fill="#c4c4c4" />
        <rect x="479" y="328" width="39" height="74" fill="#c4c4c4" />
        <path d="M411 241h73M457 241v99h27M411 290h12v-25h61M424 265v98h60M411 339h24v-50h49M411 388h35v-76h38M469 208v180h15M518 265h12M518 363h6v43h-55v18" />
      </g>
      <g stroke="#4040f8" strokeWidth="3">
        <path d="M115 241h294M115 290h294M115 344h90M225 352h148M395 339h14M115 388h294M530 265h83v99h344M613 265h18" />
        <Port x={106} y={241} />
        <Port x={106} y={290} />
        <Port x={106} y={344} />
        <Port x={106} y={388} />
        <Port x={966} y={364} />
        <Buffer x={264} y={241} />
        <Buffer x={264} y={291} />
        <Buffer x={264} y={352} />
        <Buffer x={264} y={388} />
        <Buffer x={553} y={265} />
        <path d="M205 332l19 7v23l-19 7zM374 320l20 7v22l-20 8z" fill="#cfcfde" strokeWidth="2" />
        <path d="M415 247h4v4h-4zM415 295h4v4h-4zM415 342h4v4h-4zM415 394h4v4h-4z" strokeWidth="2" />
      </g>
    </svg>
  );
}

function ScrollArrow({ label, path }: { label: string; path: string }) {
  return (
    <button type="button" aria-label={label}>
      <svg width="12" height="12" viewBox="0 0 12 12" className="block" aria-hidden>
        <path d={path} fill="#9f9f9f" />
      </svg>
    </button>
  );
}

const PROPERTIES: [string, string][] = [
  ["Full Name", "|dram|oneportram:oneportram_inst|lpm_ram_dq:lpm_ram_dq_component"],
  ["Coordinate", "(19 , 12)"],
  ["Resource Type", "Combinational cell"],
  ["Location", "LCCOMB_X19_Y12_N16"],
  ["Location Assignment", "No"],
  ["Sum LUT Mask", "CF00"],
];

function PropertyTable() {
  return (
    <div className="flex h-[181px] flex-col border border-[#828790] bg-[#efefef]">
      <div className="flex min-h-0 flex-1">
        <div className="min-w-0 flex-1 overflow-hidden bg-white">
          <table className="w-full table-fixed border-collapse">
            <thead>
              <tr className="h-[31px]">
                <th className="w-[158px] border-r border-[#dcdcdc] pt-0.5 text-center font-normal">Properties/Modes</th>
                <th aria-label="Value" />
              </tr>
            </thead>
            <tbody>
              {PROPERTIES.map(([name, value]) => (
                <tr key={name} className="h-[23px] border-b border-[#d5d5d5] even:bg-[#f5f5f5]">
                  <td className="border-r border-[#d5d5d5] pt-0.5 pl-0.5 leading-5 whitespace-nowrap">{name}</td>
                  <td className="overflow-hidden pt-0.5 pl-0.5 leading-5 whitespace-nowrap">{value}</td>
                </tr>
              ))}
            </tbody>
          </table>
        </div>
        <div className="flex w-[25px] shrink-0 flex-col items-center gap-4 pt-[26px]">
          <span className="h-3.5 w-[11px] bg-[#858585]" />
          <span className="h-3.5 w-[11px] bg-[#858585]" />
        </div>
      </div>
      <div className="flex h-[25px] items-center gap-4 pl-[26px]">
        <span className="h-[11px] w-[111px] bg-[#858585]" />
        <span className="h-[11px] w-[111px] bg-[#858585]" />
      </div>
    </div>
  );
}

function NodePropertiesDock() {
  return (
    <section className="mt-[21px] flex min-h-0 flex-1 flex-col">
      <DockTitle title="Node Properties" className="mr-[3px] ml-[9px]" />
      <div className="mt-3 mr-2.5 ml-4 flex items-center gap-0.5">
        <label htmlFor="selected-elements">Selected elements:</label>
        <Combo id="selected-elements" value="_~419" className="flex-1" />
      </div>

      <div className="mt-[21px] mr-[13px] ml-[19px] flex min-h-0 flex-1 flex-col border border-[#828790] bg-[#efefef]">
        <div className="flex min-h-0 flex-1">
          <div className="min-w-0 flex-1 bg-white">
            <CellSchematic />
          </div>
          <div className="flex w-[25px] shrink-0 flex-col items-center justify-between py-2">
            <ScrollArrow label="Scroll up" path="M6 1l6 9H0z" />
            <ScrollArrow label="Scroll down" path="M6 11l6-9H0z" />
          </div>
        </div>
        <div className="flex h-[25px] shrink-0 items-center justify-between pl-1.5">
          <ScrollArrow label="Scroll left" path="M1 6l9-6v12z" />
          <div className="flex items-center gap-2">
            <ScrollArrow label="Scroll right" path="M11 6L2 0v12z" />
            <button type="button" aria-label="Zoom schematic" className="mr-0.5 flex size-[23px] items-center justify-center rounded-[3px] border border-[#c8c8c8] bg-white">
              <ZoomIcon />
            </button>
          </div>
        </div>
      </div>

      <div className="mt-1.5 mr-[15px] ml-[19px] shrink-0 border border-[#e2e2e2] bg-[#f9f9f9] pt-[3px] pr-[5px] pb-0.5 pl-[3px]">
        <PropertyTable />
        <button type="button" className="mt-0.5 grid h-5 w-[138px] items-center">
          <svg viewBox="0 0 138 20" className="h-5 w-full [grid-area:1/1]" fill="#fff" aria-hidden>
            <path d="M0.500 0l5 16q1 3 4 3h120q3 0 4-3l4-16" stroke="#000" />
          </svg>
          <span className="pt-0.5 leading-5 [grid-area:1/1]">Combinational</span>
        </button>
      </div>
      <div role="tablist" className="ml-[19px] flex shrink-0 items-start">
        <button type="button" role="tab" aria-selected className="h-[26px] w-[108px] border border-t-0 border-[#e2e2e2] bg-[#f9f9f9] pt-0.5">
          Properties
        </button>
        <button type="button" role="tab" className="h-6 w-20 border border-t-0 border-r-0 border-[#e6e6e6] bg-[#f3f3f3] pt-0.5 pr-1">
          Fan-in
        </button>
        <button type="button" role="tab" className="h-6 w-[88px] border border-t-0 border-l-0 border-[#e6e6e6] bg-[#f3f3f3] pt-0.5">
          Fan-out
        </button>
      </div>
    </section>
  );
}

/* ------------------------------------------------------------------ */

function MessageStrip() {
  return (
    <footer className="flex h-[13px] shrink-0 items-end pl-[37px]">
      <div className="h-1 w-[23px] border border-b-0 border-[#a6a6a6]" />
      <div className="ml-1 h-[5px] w-[720px] border border-b-0 border-[#828790] bg-white" />
      <div className="ml-3 h-1 w-[23px] border border-b-0 border-[#a6a6a6]" />
      <div className="ml-0.5 h-[7px] flex-1 border border-b-0 border-[#828790] bg-white" />
    </footer>
  );
}

export default function App() {
  return (
    <div className="relative flex h-screen flex-col overflow-hidden bg-[#efefef] font-['DejaVu_Sans_Condensed','DejaVu_Sans',sans-serif] text-base text-black">
      <MenuBar />
      <div className="flex min-h-0 flex-1">
        <ToolBar />
        <div className="mr-1.5 flex w-[364px] shrink-0 flex-col pt-[3px]">
          <ReportDock />
          <TasksDock />
        </div>
        <ChipView />
        <div className="flex w-[621px] shrink-0 flex-col pt-[3px] pb-3.5">
          <LayersDock />
          <NodePropertiesDock />
        </div>
      </div>
      <MessageStrip />
      <div className="pointer-events-none absolute right-1.5 bottom-4 font-['Liberation_Sans',sans-serif] text-[40px] leading-none text-white/60 [text-shadow:1px_1px_2px_rgb(0_0_0/0.45)]">
        CSDN @FakeOccupational
      </div>
    </div>
  );
}
